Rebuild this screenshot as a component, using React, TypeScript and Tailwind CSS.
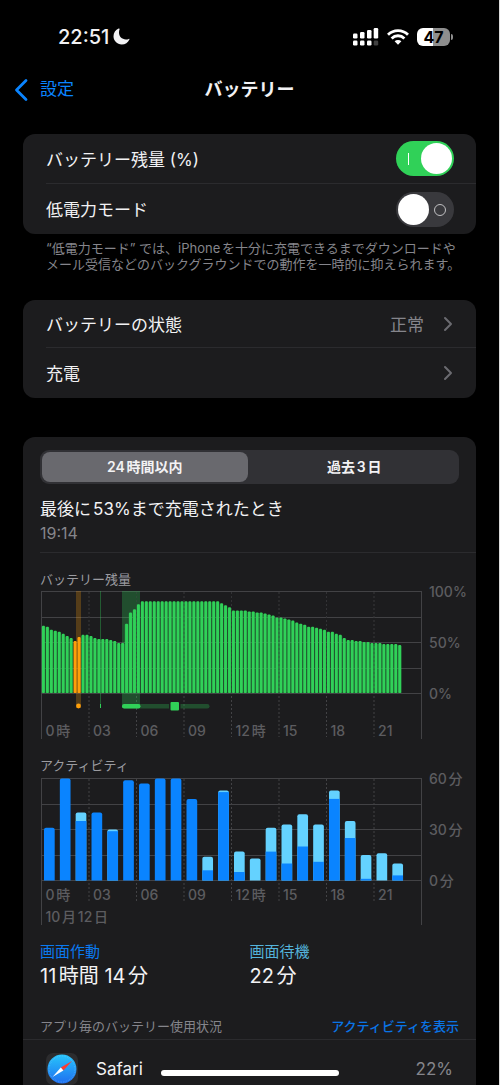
import { ChevronRight } from "lucide-react";

const battery = [
    66, 65, 62, 61, 60, 58, 56, 54, 51, 55, 57, 57, 56, 54, 53, 53, 53, 52, 51, 49, 49, 68, 79, 82, 87,
    ...Array(20).fill(90),
    88, 86, 84, 81, 81, 81, 81, 80, 80, 79, 79, 78, 77, 76, 74, 74, 73, 72, 71, 69, 68, 67, 65, 65, 64,
    63, 62, 60, 60, 58, 57, 54, 52, 52, 51, 51, 50, 50, 49, 49, 49, 48, 48, 48, 48, 47,
];

// [screen on, screen off] in minutes, one per hour
const activity = [
    [31, 0], [60, 0], [35, 5], [40, 0], [29, 1], [59, 0], [57, 0], [60, 0], [60, 0], [48, 0], [6, 8], [52, 1],
    [5, 12], [0, 13], [17, 14], [10, 23], [20, 19], [11, 22], [48, 5], [25, 10], [1, 14], [0, 16], [3, 7],
];

const hours = ["0時", "03", "06", "09", "12時", "15", "18", "21"];

const LEFT = 1.5;
const RIGHT = 381.5;
const HOUR = (RIGHT - LEFT) / 24;
const PLOT = 102;

function Grid({ top, axisEnd, dashEnd }: { top: number, axisEnd: number, dashEnd: number }) {
    return (
        <g stroke="#424245" strokeWidth="1">
            {[0, 1, 2, 3, 4].map((i) => (
                <line key={i} x1={LEFT} x2={RIGHT} y1={Math.round(top + (PLOT * i) / 4) + 0.5} y2={Math.round(top + (PLOT * i) / 4) + 0.5} />
            ))}
            <line x1={LEFT} x2={LEFT} y1={top} y2={axisEnd} />
            <line x1={RIGHT} x2={RIGHT} y1={top} y2={axisEnd} />
            {hours.slice(1).map((h, i) => {
                const x = LEFT + (i + 1) * 3 * HOUR;
                return <line key={h} x1={x} x2={x} y1={top + 1} y2={dashEnd} strokeDasharray="2 2" />;
            })}
        </g>
    );
}

function Labels({ top, baseline, values }: { top: number, baseline: number, values: string[] }) {
    return (
        <g fill="#5c5c60" className="text-sm font-medium">
            {values.map((v, i) => (
                <text key={v} x="389" y={top + 6 + (PLOT * i) / 2}>{v}</text>
            ))}
            {hours.map((h, i) => (
                <text key={h} x={LEFT + i * 3 * HOUR + 4} y={baseline}>{h}</text>
            ))}
        </g>
    );
}

function BatteryChart() {
    const top = 4;
    const bottom = top + PLOT;
    const step = HOUR / 4;
    return (
        <svg viewBox="0 0 436 156" className="block w-full overflow-visible" role="img" aria-label="バッテリー残量">
            <Grid top={top} axisEnd={152} dashEnd={150} />
            <rect x="36" y={top} width="5" height="117" fill="#ff9f0a" opacity="0.25" />
            <rect x="60" y={top} width="1" height="117" fill="#30d158" opacity="0.35" />
            <rect x="82" y={top} width="18" height="117" fill="#30d158" opacity="0.28" />
            {battery.map((level, i) => {
                const h = (level * PLOT) / 100;
                const x = LEFT + i * step;
                const color = i === 8 || i === 9 ? "#ff9f0a" : "#30d158";
                return (
                    <g key={i} fill={color}>
                        <rect x={x} y={bottom - h + 1} width={step} height={h - 1} opacity="0.3" />
                        <rect x={x + 0.5} y={bottom - h} width="2.9" height={h} rx="0.8" />
                    </g>
                );
            })}
            <g stroke="#1c1c1e" strokeDasharray="2 2" opacity="0.4">
                {hours.slice(1).map((h, i) => (
                    <line key={h} x1={LEFT + (i + 1) * 3 * HOUR} x2={LEFT + (i + 1) * 3 * HOUR} y1={top + 1} y2={bottom} />
                ))}
            </g>
            <circle cx="38.5" cy="119" r="2.4" fill="#ff9f0a" />
            <rect x="60" y="117" width="1" height="4" fill="#30d158" />
            <rect x="82" y="117" width="87.5" height="4.5" rx="2.2" fill="#30d158" opacity="0.28" />
            <rect x="82" y="117" width="18.5" height="4.5" rx="2.2" fill="#30d158" />
            <rect x="129" y="115" width="11.5" height="9" fill="#1c1c1e" />
            <rect x="130.5" y="115" width="8.5" height="8.5" rx="1" fill="#30d158" />
            <Labels top={top} baseline={149} values={["100%", "50%", "0%"]} />
        </svg>
    );
}

function ActivityChart() {
    const top = 5;
    const bottom = top + PLOT + 0.5;
    return (
        <svg viewBox="0 0 436 154" className="block w-full overflow-visible" role="img" aria-label="アクティビティ">
            <Grid top={top} axisEnd={152} dashEnd={128} />
            {activity.map(([on, off], i) => {
                const x = LEFT + i * HOUR + 2.5;
                const total = ((on + off) * PLOT) / 60;
                const h = (on * PLOT) / 60;
                return (
                    <g key={i}>
                        <path
                            d={`M${x} ${bottom}v${2 - total}q0 -2 2 -2h6.7q2 0 2 2V${bottom}z`}
                            fill={off ? "#64d2ff" : "#0a84ff"}
                        />
                        {off > 0 && <rect x={x} y={bottom - h} width="10.7" height={h} fill="#0a84ff" />}
                    </g>
                );
            })}
            <Labels top={top} baseline={127} values={["60分", "30分", "0分"]} />
            <text x="5.5" y="149" fill="#5c5c60" className="text-sm font-medium">10月12日</text>
        </svg>
    );
}

function Toggle({ id, on }: { id: string, on?: boolean }) {
    return (
        <input
            id={id}
            type="checkbox"
            role="switch"
            defaultChecked={on}
            className="relative h-[35px] w-[58px] shrink-0 appearance-none rounded-full bg-[#39393d] before:absolute before:top-3 before:right-2 before:size-3 before:rounded-full before:border before:border-[#c0c0c2] after:absolute after:top-[2px] after:left-[2px] after:size-[31px] after:rounded-full after:bg-white checked:bg-[#30d158] checked:before:top-3 checked:before:right-auto checked:before:left-3 checked:before:h-3 checked:before:w-px checked:before:rounded-none checked:before:border-0 checked:before:bg-white checked:after:left-[25px]"
        />
    );
}

function StatusBar() {
    return (
        <div className="flex h-[60px] items-center justify-between pt-[13px] pr-[46px] pl-[58px]">
            <div className="flex items-center gap-1 text-xl font-medium">
                22:51
                <svg width="17" height="17" viewBox="0 0 17 17" fill="currentColor">
                    <path d="M5.6 0.6C2.6 1.9 0.5 4.9 0.5 8.3c0 4.6 3.7 8.2 8.2 8.2c3.5 0 6.4-2 7.7-5c.2-.5-.1-.8-.6-.6c-1 .4-2 .5-2.9.5c-4.1 0-6.9-2.8-6.9-6.8c0-1.1.2-2.3.6-3.3c.2-.6-.3-.9-1-.7z" />
                </svg>
            </div>
            <div className="flex items-center gap-2">
                <svg width="26" height="18" viewBox="0 0 26 18" fill="#fff">
                    <rect x="0" y="5.5" width="4.5" height="5" rx="1.2" />
                    <rect x="7" y="4" width="4.5" height="6.5" rx="1.2" />
                    <rect x="14" y="2" width="4.5" height="8.5" rx="1.2" />
                    <rect x="20.7" y="0" width="4.5" height="10.5" rx="1.2" />
                    <rect x="0" y="12.5" width="4.5" height="5" rx="1.2" />
                    <rect x="7" y="12.5" width="4.5" height="5" rx="1.2" />
                    <rect x="14" y="12.5" width="4.5" height="5" rx="1.2" />
                    <rect x="20.7" y="12.5" width="4.5" height="5" rx="1.2" opacity="0.25" />
                </svg>
                <svg width="22" height="16" viewBox="0 0 22 16" fill="none" stroke="#fff" strokeWidth="2.8">
                    <path d="M1 5.7a14.2 14.2 0 0 1 20 0" />
                    <path d="M4.6 9.4a9.1 9.1 0 0 1 12.8 0" />
                    <path d="M11 15.8L7.6 12.3a4.9 4.9 0 0 1 6.8 0z" fill="#fff" stroke="none" />
                </svg>
                <div className="flex items-center gap-px">
                    <div className="h-[18px] w-[33px] rounded-md bg-[linear-gradient(90deg,#fff_47%,#8e8e8e_47%)] text-center text-base leading-[18px] font-bold text-black">
                        47
                    </div>
                    <div className="h-[6px] w-[2px] rounded-r-full bg-[#8e8e8e]" />
                </div>
            </div>
        </div>
    );
}

function SafariIcon() {
    return (
        <svg width="32" height="32" viewBox="0 0 32 32">
            <defs>
                <linearGradient id="safari" x1="0" y1="0" x2="0" y2="1">
                    <stop offset="0" stopColor="#27c5fb" />
                    <stop offset="1" stopColor="#1f6ff0" />
                </linearGradient>
            </defs>
            <rect width="32" height="32" rx="7" fill="#2c2c2e" />
            <circle cx="16" cy="16" r="14.5" fill="url(#safari)" />
            <circle cx="16" cy="16" r="13" fill="none" stroke="#8fd6ff" strokeWidth="1.4" strokeDasharray="0.4 1.3" opacity="0.5" />
            <path d="M26 8L17.4 17.4L14.8 14.6z" fill="#ff3b30" />
            <path d="M6.5 24L14.8 14.6L17.4 17.4z" fill="#fff" />
        </svg>
    );
}

export default function App() {
    return (
        <div className="min-h-screen border-r border-[#dcdcdc] bg-black font-['Inter','Noto_Sans_CJK_JP',sans-serif] text-[#f2f2f4] [text-autospace:normal]" lang="ja">
            <StatusBar />

            <header className="grid h-[58px] grid-cols-3 items-center px-3 pt-[2px]">
                <a href="#" className="flex items-center gap-[10px] text-[17px] text-[#0a84ff]">
                    <svg width="18" height="24" viewBox="0 0 18 24" fill="none" stroke="currentColor" strokeWidth="2.8" strokeLinecap="round" strokeLinejoin="round">
                        <path d="M14 2.5L4.5 12L14 21.5" />
                    </svg>
                    設定
                </a>
                <h1 className="text-center text-lg font-semibold">バッテリー</h1>
            </header>

            <main className="px-[23px] pt-4">
                <section className="rounded-xl bg-[#1c1c1e] pl-[23px] text-[17px]">
                    <div className="flex h-[50px] items-center justify-between border-b border-[#2b2b2e] pr-[22px]">
                        <label htmlFor="percent" className="pt-1">バッテリー残量 (%)</label>
                        <Toggle id="percent" on />
                    </div>
                    <div className="flex h-[50px] items-center justify-between pr-[22px]">
                        <label htmlFor="lowpower" className="pt-1">低電力モード</label>
                        <Toggle id="lowpower" />
                    </div>
                </section>
                <p className="mt-[6px] pl-[23px] text-[13px] leading-4 whitespace-nowrap text-[#85858b]">
                    “低電力モード” では、iPhoneを十分に充電できるまでダウンロードや<br />
                    メール受信などのバックグラウンドでの動作を一時的に抑えられます。
                </p>

                <section className="mt-7 rounded-xl bg-[#1c1c1e] pl-[23px] text-[17px]">
                    <a href="#" className="flex h-12 items-center border-b border-[#2b2b2e] pr-4">
                        <span className="flex-1 pt-1">バッテリーの状態</span>
                        <span className="mr-3 pt-1 text-[#85858b]">正常</span>
                        <ChevronRight size={24} className="text-[#6b6b70]" />
                    </a>
                    <a href="#" className="flex h-[50px] items-center pr-4">
                        <span className="flex-1 pt-1">充電</span>
                        <ChevronRight size={24} className="text-[#6b6b70]" />
                    </a>
                </section>

                <section className="mt-[39px] rounded-t-xl bg-[#1c1c1e] pt-[13px]">
                    <div className="pl-[17px]">
                        <div className="mr-[17px] grid h-[34px] grid-cols-2 gap-1 rounded-[9px] bg-[#313135] p-[2px] text-sm font-semibold">
                            <button className="rounded-lg bg-[#69696e]">24時間以内</button>
                            <button>過去3日</button>
                        </div>
                        <div className="border-b border-[#2b2b2e] pt-[13px] pb-[9px]">
                            <h2 className="text-[17px] leading-6">最後に53%まで充電されたとき</h2>
                            <p className="mt-[2px] text-base leading-5 text-[#85858b]">19:14</p>
                        </div>

                        <h3 className="pt-[18px] text-[13px] leading-4 text-[#9b9ba0]">バッテリー残量</h3>
                        <BatteryChart />
                        <h3 className="mt-[14px] text-[13px] leading-4 text-[#9b9ba0]">アクティビティ</h3>
                        <ActivityChart />

                        <dl className="mt-[15px] mr-[17px] grid grid-cols-2">
                            <div>
                                <dt className="text-[15px] leading-5 text-[#0a7af0]">画面作動</dt>
                                <dd className="text-xl leading-7">11時間 14分</dd>
                            </div>
                            <div>
                                <dt className="text-[15px] leading-5 text-[#54b4dc]">画面待機</dt>
                                <dd className="text-xl leading-7">22分</dd>
                            </div>
                        </dl>
                    </div>

                    <div className="mt-[26px] flex justify-between border-b border-[#2b2b2e] px-[17px] pb-[3px] text-[13px] leading-5">
                        <h3 className="text-[#85858b]">アプリ毎のバッテリー使用状況</h3>
                        <a href="#" className="font-medium text-[#0a74e6]">アクティビティを表示</a>
                    </div>
                    <div className="flex items-center pt-[13px] pr-[23px] pl-[23px] text-[17px]">
                        <SafariIcon />
                        <span className="ml-[18px] flex-1 pt-[2px]">Safari</span>
                        <span className="pt-[2px] text-[#85858b]">22%</span>
                    </div>
                </section>
            </main>

            <div className="fixed bottom-[9px] left-1/2 h-[6px] w-[178px] -translate-x-1/2 rounded-full bg-white" />
        </div>
    );
}
